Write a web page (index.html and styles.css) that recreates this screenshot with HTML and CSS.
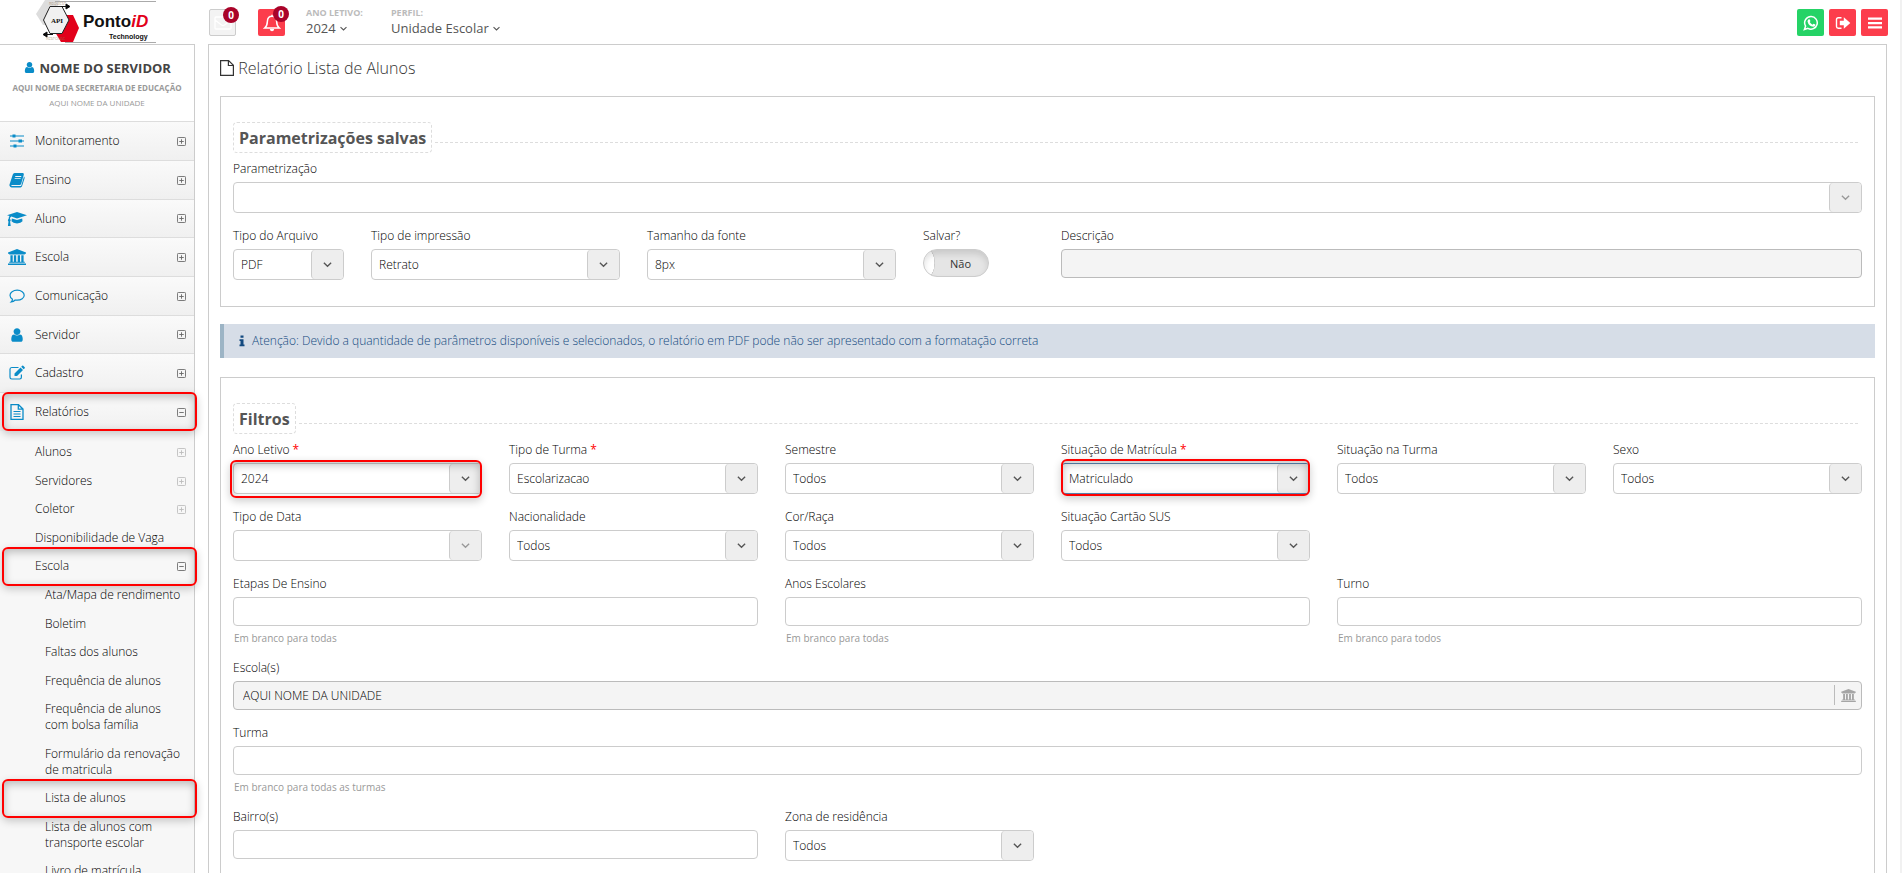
FILE: index.html
```html
<!DOCTYPE html>
<html lang="pt-BR">
<head>
    <meta charset="UTF-8">
    <meta name="viewport" content="width=device-width, initial-scale=1.0">
    <title>Relatório Lista de Alunos</title>
    <link rel="stylesheet" href="styles.css">
</head>
<body>

<!-- icons -->
<svg class="sprite" xmlns="http://www.w3.org/2000/svg">
    <symbol id="i-user" viewBox="0 0 1792 1792"><path d="M1536 1399q0 109-62.5 187t-150.5 78h-854q-88 0-150.5-78t-62.5-187q0-85 8.5-160.5t31.5-152 58.5-131 94-89 134.5-34.5q131 128 313 128t313-128q76 0 134.5 34.5t94 89 58.5 131 31.5 152 8.5 160.5zm-256-887q0 159-112.5 271.5t-271.5 112.5-271.5-112.5-112.5-271.5 112.5-271.5 271.5-112.5 271.5 112.5 112.5 271.5z"/></symbol>
    <symbol id="i-down" viewBox="0 0 10 10"><path d="M1.700 3.400L5 6.600l3.300-3.200" fill="none" stroke="currentColor" stroke-width="1.200"/></symbol>
    <symbol id="i-plus" viewBox="0 0 10 10"><path d="M1.500.5h7q1 0 1 1v7q0 1-1 1h-7q-1 0-1-1v-7q0-1 1-1zM5 2.500v5M2.500 5h5" fill="none" stroke="currentColor"/></symbol>
    <symbol id="i-minus" viewBox="0 0 10 10"><path d="M1.500.5h7q1 0 1 1v7q0 1-1 1h-7q-1 0-1-1v-7q0-1 1-1zM2.500 5h5" fill="none" stroke="currentColor"/></symbol>
    <symbol id="i-sliders" viewBox="0 0 16 16"><path d="M1 2.500h14v1.100H1zM1 7.500h14v1.100H1zM1 12.500h14v1.100H1z"/><path d="M3.500 1.500h3v3.100h-3zM9.500 6.500h3.500v3.100H9.500zM4.500 11.500h3v3.100h-3z"/></symbol>
    <symbol id="i-book" viewBox="0 0 16 16"><path fill-rule="evenodd" d="M5.600 1h8.200q1.400.2 1 1.700l-2.600 9q-.4 1.300-1.700 1.300H3.200q-.9 0-1 .6.100.5 1 .5h8.200q.7 0 .9-.7l2.700-8.900q.9.600.6 1.700l-2.500 7.900q-.4 1.300-1.700 1.300H2.700q-1.700-.1-2.200-1.700-.2-.9.200-1.700L3.800 2.600Q4.300 1.100 5.600 1zM6.400 4l-.3.900h6l.3-.9zM5.800 6.200l-.3.900h6l.3-.9z"/></symbol>
    <symbol id="i-cap" viewBox="0 0 20 16"><path d="M10 1l10 3.200-10 3.300-5.700-1.900q-1.300.8-1.400 2.400.8.500.8 1.300 0 .8-.6 1.200L3.700 15H.900l.6-4.500q-.6-.5-.6-1.200 0-.8.700-1.300.1-1.700.9-2.900L0 4.200zM4.800 7.400L10 9.100l5.200-1.700.3 2.900Q14 12.300 10 12.400q-4-.1-5.500-2.100z"/></symbol>
    <symbol id="i-bank" viewBox="0 0 18 16"><path d="M9 0l9 3.500v1.200h-1.200v.8H1.200v-.8H0V3.500zM2.400 6.200h2.300v6.600h1.200V6.200h2.300v6.600h1.500V6.200H12v6.600h1.300V6.200h2.300v6.600h1.200v1H1.200v-1h1.200zM0 16v-1.500h18V16z"/></symbol>
    <symbol id="i-comment" viewBox="0 0 16 16"><path d="M8.200 2.200c4 0 7 2.200 7 5s-3 5-7 5q-1 0-2-.2-1.700 1.700-4 2 1.200-1.200 1.300-2.800C2 10.200 1 8.800 1 7.200c0-2.800 3.200-5 7.200-5z" fill="none" stroke="currentColor" stroke-width="1.200"/></symbol>
    <symbol id="i-edit" viewBox="0 0 16 16"><path d="M9.500 2.500H2.700Q1 2.600 1 4.300v8q0 1.700 1.700 1.700h8q1.700 0 1.700-1.700V9.500" fill="none" stroke="currentColor" stroke-width="1.200"/><path d="M5.500 8.500l6-6 2.500 2.500-6 6H5.500zM12.200 1.800l1-1q.5-.4 1 0l1.500 1.500q.4.500 0 1l-1 1z"/></symbol>
    <symbol id="i-report" viewBox="0 0 16 16"><path d="M2 .7h7.500L14 5v10.300H2zM9.300.7v4.500H14" fill="none" stroke="currentColor" stroke-width="1.300"/><path d="M4.500 7h7v1.100h-7zM4.500 9.500h7v1.100h-7zM4.500 12h7v1.100h-7z"/></symbol>
    <symbol id="i-file" viewBox="0 0 14 16"><path d="M.6.6h8l4.800 4.600v10.200H.6zM8.400.8v4.700h4.800" fill="none" stroke="currentColor" stroke-width="1.200"/></symbol>
    <symbol id="i-mail" viewBox="0 0 18 14"><path d="M2 1h14q1 0 1 1v10q0 1-1 1H2q-1 0-1-1V2q0-1 1-1zM1 4l6.500 5q1.500 1 3 0L17 4" fill="none" stroke="currentColor" stroke-width="1.300"/></symbol>
    <symbol id="i-bell" viewBox="0 0 18 18"><path d="M9 2.200c3 0 4.500 2.200 4.600 5 .1 3.400.9 5.300 2.700 6.900H1.700c1.800-1.600 2.600-3.500 2.700-6.900.1-2.800 1.600-5 4.600-5zM9 2.200V.8" fill="none" stroke="currentColor" stroke-width="1.500"/><path d="M6.800 15h4.400q-.3 2.200-2.200 2.200T6.800 15z"/></symbol>
    <symbol id="i-whats" viewBox="0 0 16 16"><path d="M8.200 1.500a6.300 6.300 0 1 1-3.300 11.800l-3.500 1.200 1.200-3.400A6.300 6.300 0 0 1 8.200 1.500z" fill="none" stroke="currentColor" stroke-width="1.500"/><path d="M5.700 4.300q.7-.4 1.100.3l.6 1.400q0 .4-.7 1.100 1 1.900 2.800 2.600l.9-1q.2-.2 2 .9.100 1.900-2 2.200-4.700-.6-5.900-5.400 0-1.400 1.200-2.100z"/></symbol>
    <symbol id="i-exit" viewBox="0 0 16 14"><path d="M6.500 1.800H3.300Q1.500 1.800 1.500 3.500v7q0 1.700 1.800 1.700h3.200" fill="none" stroke="currentColor" stroke-width="1.400"/><path d="M4.800 4.700h4V1.200L15.300 7l-6.500 5.800V9.300h-4z"/></symbol>
    <symbol id="i-bars" viewBox="0 0 14 12"><path d="M0 .5h14v2.300H0zM0 5h14v2.200H0zM0 9.200h14v2.300H0z"/></symbol>
    <symbol id="i-info" viewBox="0 0 6 12"><path d="M1.500.5h3v2.300h-3zM.5 4.200h4v5.300h1v1.800h-5V9.500h1V6h-1z"/></symbol>
</svg>

<header class="topbar">
    <a class="logo" href="#">
        <svg width="122" height="44" viewBox="0 0 122 44">
            <path d="M1 14L10 0h15l-10 25H8z" fill="#ddd"/>
            <path d="M27 15h11l6 13-6 14H26l-6-10z" fill="#e2001a"/>
            <path d="M15 6.500h12L34 20l-7 13.500H15L8.500 20z" fill="#f1f1f1" stroke="#222"/>
            <path d="M20 1.500h101M30 42.500h91" stroke="#aaa"/>
            <path d="M26 6.500h6M31 4l4 2.500-4 2.500zM10 34.500h8M12 32l-4 2.500 4 2.500z" stroke="#111"/>
            <text class="logo-tiny" x="14" y="5">REQUEST</text>
            <text class="logo-tiny" x="11" y="40">RESPONSE</text>
            <text class="logo-api" x="16" y="23">API</text>
            <text class="logo-name" x="48" y="27">Ponto<tspan class="logo-id">iD</tspan></text>
            <text class="logo-sub" x="74" y="39">Technology</text>
        </svg>
    </a>
    <div class="alerts">
        <button class="btn-icon btn-mail" aria-label="Mensagens"><svg width="18" height="14"><use href="#i-mail"/></svg><span class="badge">0</span></button>
        <button class="btn-icon btn-red" aria-label="Notificações"><svg width="18" height="18"><use href="#i-bell"/></svg><span class="badge">0</span></button>
    </div>
    <div class="context">
        <span class="context-label">ANO LETIVO:</span>
        <a href="#">2024 <svg width="9" height="9"><use href="#i-down"/></svg></a>
    </div>
    <div class="context">
        <span class="context-label">PERFIL:</span>
        <a href="#">Unidade Escolar <svg width="9" height="9"><use href="#i-down"/></svg></a>
    </div>
    <div class="actions">
        <button class="btn-icon btn-green" aria-label="WhatsApp"><svg width="16" height="16"><use href="#i-whats"/></svg></button>
        <button class="btn-icon btn-red" aria-label="Sair"><svg width="16" height="14"><use href="#i-exit"/></svg></button>
        <button class="btn-icon btn-red" aria-label="Menu"><svg width="14" height="12"><use href="#i-bars"/></svg></button>
    </div>
</header>

<div class="layout">
    <aside class="sidebar">
        <div class="login-info">
            <strong class="login-name"><svg width="13" height="13"><use href="#i-user"/></svg> NOME DO SERVIDOR</strong>
            <b class="login-org">AQUI NOME DA SECRETARIA DE EDUCAÇÃO</b>
            <span class="login-unit">AQUI NOME DA UNIDADE</span>
        </div>
        <nav>
            <ul class="menu">
                <li><a href="#"><svg class="icon"><use href="#i-sliders"/></svg>Monitoramento<svg class="toggle"><use href="#i-plus"/></svg></a></li>
                <li><a href="#"><svg class="icon"><use href="#i-book"/></svg>Ensino<svg class="toggle"><use href="#i-plus"/></svg></a></li>
                <li><a href="#"><svg class="icon icon-wide"><use href="#i-cap"/></svg>Aluno<svg class="toggle"><use href="#i-plus"/></svg></a></li>
                <li><a href="#"><svg class="icon icon-wide"><use href="#i-bank"/></svg>Escola<svg class="toggle"><use href="#i-plus"/></svg></a></li>
                <li><a href="#"><svg class="icon"><use href="#i-comment"/></svg>Comunicação<svg class="toggle"><use href="#i-plus"/></svg></a></li>
                <li><a href="#"><svg class="icon"><use href="#i-user"/></svg>Servidor<svg class="toggle"><use href="#i-plus"/></svg></a></li>
                <li><a href="#"><svg class="icon"><use href="#i-edit"/></svg>Cadastro<svg class="toggle"><use href="#i-plus"/></svg></a></li>
                <li>
                    <a class="marked" href="#"><svg class="icon"><use href="#i-report"/></svg>Relatórios<svg class="toggle"><use href="#i-minus"/></svg></a>
                    <ul class="submenu">
                        <li><a href="#">Alunos<svg class="toggle dim"><use href="#i-plus"/></svg></a></li>
                        <li><a href="#">Servidores<svg class="toggle dim"><use href="#i-plus"/></svg></a></li>
                        <li><a href="#">Coletor<svg class="toggle dim"><use href="#i-plus"/></svg></a></li>
                        <li><a href="#">Disponibilidade de Vaga</a></li>
                        <li>
                            <a class="marked" href="#">Escola<svg class="toggle"><use href="#i-minus"/></svg></a>
                            <ul>
                                <li><a href="#">Ata/Mapa de rendimento</a></li>
                                <li><a href="#">Boletim</a></li>
                                <li><a href="#">Faltas dos alunos</a></li>
                                <li><a href="#">Frequência de alunos</a></li>
                                <li><a href="#">Frequência de alunos<br>com bolsa família</a></li>
                                <li><a href="#">Formulário da renovação<br>de matricula</a></li>
                                <li><a class="marked" href="#">Lista de alunos</a></li>
                                <li><a href="#">Lista de alunos com<br>transporte escolar</a></li>
                                <li><a href="#">Livro de matrícula</a></li>
                            </ul>
                        </li>
                    </ul>
                </li>
            </ul>
        </nav>
    </aside>

    <main class="content">
        <h1><svg width="14" height="16"><use href="#i-file"/></svg> Relatório Lista de Alunos</h1>

        <section class="panel">
            <h2><span>Parametrizações salvas</span></h2>
            <div class="row">
                <div class="col-12">
                    <label for="parametrizacao">Parametrização</label>
                    <div class="select off"><select id="parametrizacao" disabled><option></option></select><svg><use href="#i-down"/></svg></div>
                </div>
            </div>
            <div class="row">
                <div class="col-1">
                    <label for="arquivo">Tipo do Arquivo</label>
                    <div class="select"><select id="arquivo"><option>PDF</option></select><svg><use href="#i-down"/></svg></div>
                </div>
                <div class="col-2">
                    <label for="impressao">Tipo de impressão</label>
                    <div class="select"><select id="impressao"><option>Retrato</option></select><svg><use href="#i-down"/></svg></div>
                </div>
                <div class="col-2">
                    <label for="fonte">Tamanho da fonte</label>
                    <div class="select"><select id="fonte"><option>8px</option></select><svg><use href="#i-down"/></svg></div>
                </div>
                <div class="col-1">
                    <label for="salvar">Salvar?</label>
                    <div class="switch"><input type="checkbox" id="salvar"><span>Não</span></div>
                </div>
                <div class="col-6">
                    <label for="descricao">Descrição</label>
                    <input type="text" id="descricao" disabled>
                </div>
            </div>
        </section>

        <div class="notice"><svg width="6" height="12"><use href="#i-info"/></svg>Atenção: Devido a quantidade de parâmetros disponíveis e selecionados, o relatório em PDF pode não ser apresentado com a formatação correta</div>

        <section class="panel">
            <h2><span>Filtros</span></h2>
            <div class="row">
                <div class="col-2">
                    <label for="ano">Ano Letivo <em>*</em></label>
                    <div class="select marked"><select id="ano"><option>2024</option></select><svg><use href="#i-down"/></svg></div>
                </div>
                <div class="col-2">
                    <label for="tipoTurma">Tipo de Turma <em>*</em></label>
                    <div class="select"><select id="tipoTurma"><option>Escolarizacao</option></select><svg><use href="#i-down"/></svg></div>
                </div>
                <div class="col-2">
                    <label for="semestre">Semestre</label>
                    <div class="select"><select id="semestre"><option>Todos</option></select><svg><use href="#i-down"/></svg></div>
                </div>
                <div class="col-2">
                    <label for="matricula">Situação de Matrícula <em>*</em></label>
                    <div class="select marked active"><select id="matricula"><option>Matriculado</option></select><svg><use href="#i-down"/></svg></div>
                </div>
                <div class="col-2">
                    <label for="situacaoTurma">Situação na Turma</label>
                    <div class="select"><select id="situacaoTurma"><option>Todos</option></select><svg><use href="#i-down"/></svg></div>
                </div>
                <div class="col-2">
                    <label for="sexo">Sexo</label>
                    <div class="select"><select id="sexo"><option>Todos</option></select><svg><use href="#i-down"/></svg></div>
                </div>
            </div>
            <div class="row">
                <div class="col-2">
                    <label for="tipoData">Tipo de Data</label>
                    <div class="select off"><select id="tipoData" disabled><option></option></select><svg><use href="#i-down"/></svg></div>
                </div>
                <div class="col-2">
                    <label for="nacionalidade">Nacionalidade</label>
                    <div class="select"><select id="nacionalidade"><option>Todos</option></select><svg><use href="#i-down"/></svg></div>
                </div>
                <div class="col-2">
                    <label for="cor">Cor/Raça</label>
                    <div class="select"><select id="cor"><option>Todos</option></select><svg><use href="#i-down"/></svg></div>
                </div>
                <div class="col-2">
                    <label for="sus">Situação Cartão SUS</label>
                    <div class="select"><select id="sus"><option>Todos</option></select><svg><use href="#i-down"/></svg></div>
                </div>
            </div>
            <div class="row">
                <div class="col-4">
                    <label for="etapas">Etapas De Ensino</label>
                    <input type="text" id="etapas">
                    <p class="help">Em branco para todas</p>
                </div>
                <div class="col-4">
                    <label for="anos">Anos Escolares</label>
                    <input type="text" id="anos">
                    <p class="help">Em branco para todas</p>
                </div>
                <div class="col-4">
                    <label for="turno">Turno</label>
                    <input type="text" id="turno">
                    <p class="help">Em branco para todos</p>
                </div>
            </div>
            <div class="row">
                <div class="col-12">
                    <label for="escola">Escola(s)</label>
                    <div class="addon"><input type="text" id="escola" value="AQUI NOME DA UNIDADE" disabled><span><svg width="15" height="13"><use href="#i-bank"/></svg></span></div>
                </div>
            </div>
            <div class="row">
                <div class="col-12">
                    <label for="turma">Turma</label>
                    <input type="text" id="turma">
                    <p class="help">Em branco para todas as turmas</p>
                </div>
            </div>
            <div class="row">
                <div class="col-4">
                    <label for="bairro">Bairro(s)</label>
                    <input type="text" id="bairro">
                </div>
                <div class="col-2">
                    <label for="zona">Zona de residência</label>
                    <div class="select"><select id="zona"><option>Todos</option></select><svg><use href="#i-down"/></svg></div>
                </div>
            </div>
        </section>
    </main>
</div>

</body>
</html>
```

FILE: styles.css
```css
*,
*::after {
    box-sizing: border-box;
}
body {
    display: flex;
    flex-direction: column;
    height: 100vh;
    margin: 0;
    overflow: hidden;
    border-right: 2px solid #f1f1f1;
    background-color: #fff;
    font-family: "Open Sans", Arial, sans-serif;
    font-size: 12px;
    font-weight: 300;
    line-height: 18px;
    color: #000;
}
a {
    color: inherit;
    text-decoration: none;
}
ul {
    margin: 0;
    padding: 0;
    list-style: none;
}
svg {
    fill: currentColor;
}
.sprite {
    display: none;
}

/* top bar */
.topbar {
    display: flex;
    flex: none;
    height: 44px;
    padding-right: 12px;
}
.logo {
    width: 209px;
    padding-left: 35px;
}
.logo svg {
    display: block;
}
.logo-tiny {
    font-size: 4px;
    fill: #97704a;
}
.logo-api {
    font: bold 7px "Liberation Serif", serif;
    fill: #111;
}
.logo-name {
    font: bold 17px "Liberation Sans", Arial, sans-serif;
    fill: #111;
}
.logo-id {
    font-style: italic;
    fill: #e2001a;
}
.logo-sub {
    font: bold 7px "Liberation Sans", Arial, sans-serif;
    fill: #111;
}
.alerts {
    display: flex;
    gap: 22px;
    margin: 9px 21px 0 0;
}
.actions {
    display: flex;
    gap: 5px;
    margin: 9px 0 0 auto;
}
.btn-icon {
    display: flex;
    align-items: center;
    justify-content: center;
    position: relative;
    width: 27px;
    height: 27px;
    padding: 0;
    border: 0;
    border-radius: 2px;
    color: #fff;
    font-family: inherit;
}
.btn-mail {
    border: 1px solid #ccc;
    background-color: #f3f3f3;
}
.btn-red {
    background-color: #fc3d4c;
}
.btn-green {
    background-color: #25d366;
}
.badge {
    position: absolute;
    top: -3px;
    right: -4px;
    width: 16px;
    height: 16px;
    border-radius: 8px;
    background-color: #a90329;
    font-size: 10px;
    font-weight: bold;
    line-height: 16px;
}
.context {
    margin: 6px 28px 0 0;
    font-size: 13px;
    font-weight: 400;
    color: #555;
}
.context-label {
    display: block;
    font-size: 9px;
    font-weight: bold;
    line-height: 13px;
    color: #bbb;
}

/* sidebar */
.layout {
    display: flex;
    flex: 1;
    min-height: 0;
}
.sidebar {
    flex: none;
    width: 195px;
    margin-right: 13px;
    border: 1px solid #ccc;
    border-width: 1px 1px 0 0;
    background-color: #f7f7f7;
    white-space: nowrap;
}
.login-info {
    height: 76px;
    padding-top: 13px;
    background-color: #fff;
    text-align: center;
}
.login-info > * {
    display: block;
}
.login-name {
    font-size: 13px;
    font-weight: 700;
    line-height: 20px;
    color: #444;
}
.login-name svg {
    color: #0a8cc8;
    vertical-align: -1px;
}
.login-org {
    font-size: 8px;
    font-weight: 700;
    line-height: 20px;
    color: #999;
}
.login-unit {
    font-size: 8px;
    font-weight: 400;
    line-height: 10px;
    color: #999;
}
.menu a {
    display: flex;
    align-items: center;
    position: relative;
}
.menu > li > a {
    height: 39px;
    padding-right: 8px;
    border-top: 1px solid #ddd;
    background: linear-gradient(#fafafa, #f0f0f0);
}
.menu > li:nth-child(3n) > a {
    height: 38px;
}
.icon {
    width: 16px;
    height: 16px;
    margin: 0 10px 0 9px;
    color: #0a8cc8;
}
.icon-wide {
    width: 20px;
    margin: 0 8px 0 7px;
}
.toggle {
    width: 9px;
    height: 9px;
    margin-left: auto;
    color: #666;
}
.toggle.dim {
    color: #bbb;
}
.submenu {
    padding-top: 7px;
    line-height: 16px;
}
.submenu a {
    padding: 6px 8px 7px 35px;
}
.submenu li:nth-child(even) > a {
    padding-bottom: 6px;
}
.submenu ul a {
    padding-left: 45px;
}

/* red frame over the highlighted items */
.marked {
    position: relative;
}
.marked::after {
    content: "";
    position: absolute;
    inset: -3px 0 -4px -3px;
    z-index: 1;
    border: 2px solid #f00;
    border-radius: 6px;
    box-shadow: 0 3px 8px rgba(0, 0, 0, 0.2), inset 0 3px 8px rgba(0, 0, 0, 0.25);
    pointer-events: none;
}
.menu .marked::after {
    top: 50%;
    bottom: auto;
    left: 2px;
    right: -3px;
    height: 39px;
    margin-top: -20px;
}

/* content */
.content {
    flex: 1;
    height: max-content;
    min-height: 100%;
    margin-right: 13px;
    padding: 0 11px 12px;
    border: 1px solid #ccc;
}
h1 {
    margin: 12px 0 17px;
    font-size: 16px;
    font-weight: 300;
    line-height: 22px;
    color: #333;
}
h1 svg {
    vertical-align: -2px;
}
.panel {
    padding: 25px 12px 13px;
    border: 1px solid #ccc;
}
h2 {
    display: flex;
    align-items: center;
    margin: 0 0 6px;
    padding-right: 4px;
    font-size: 16px;
    line-height: 28px;
    color: #555;
}
h2 span {
    padding: 1px 5px 0;
    border: 1px dashed #ddd;
    border-radius: 4px;
}
h2::after {
    content: "";
    flex: 1;
    margin: 9px 0 0 3px;
    border-top: 1px dashed #ddd;
}
.row {
    display: grid;
    grid-template-columns: repeat(12, 1fr);
    column-gap: 27px;
    margin-bottom: 13px;
}
.row > div {
    min-width: 0;
}
.col-1 {
    grid-column: span 1;
}
.col-2 {
    grid-column: span 2;
}
.col-4 {
    grid-column: span 4;
}
.col-6 {
    grid-column: span 6;
}
.col-12 {
    grid-column: span 12;
}
label {
    display: block;
    margin-bottom: 3px;
    line-height: 20px;
    white-space: nowrap;
}
label em {
    font-style: normal;
    font-weight: 400;
    color: #f00;
}
input[type="text"],
select {
    display: block;
    width: 100%;
    height: 29px;
    margin: 0;
    padding: 0 9px;
    border: 1px solid #ccc;
    border-radius: 4px;
    background-color: #fff;
    font-family: inherit;
    font-size: 12px;
    font-weight: inherit;
    color: #000;
}
input[type="text"]:disabled {
    border-color: #bbb;
    background-color: #f4f4f4;
}
.select {
    position: relative;
}
select {
    appearance: none;
    height: 31px;
    padding: 0 40px 0 7px;
    opacity: 1;
}
.select svg {
    position: absolute;
    top: 1px;
    right: 1px;
    width: 32px;
    height: 29px;
    padding: 9px 10px;
    border-left: 1px solid #ccc;
    border-radius: 4px;
    background-color: #eee;
    color: #555;
    pointer-events: none;
}
.select.off svg {
    color: #999;
}
.active select {
    border-color: #5b88b5;
}
.active.marked::after {
    inset: -4px 0 -2px;
}
.switch {
    position: relative;
    width: 66px;
    height: 28px;
}
.switch input {
    appearance: none;
    width: 100%;
    height: 100%;
    margin: 0;
    border: 1px solid #ccc;
    border-radius: 14px;
    background: radial-gradient(ellipse 12px 18px at 0 50%, #fff 85%, #ccc 88%, transparent 95%) #e5e5e5;
    box-shadow: inset 0 4px 6px rgba(0, 0, 0, 0.12);
}
.switch span {
    position: absolute;
    top: 6px;
    right: 18px;
    font-size: 11px;
    font-weight: 400;
    color: #333;
    pointer-events: none;
}
.help {
    margin: 5px 0 0;
    padding-left: 1px;
    font-size: 10px;
    font-weight: 400;
    line-height: 14px;
    color: #999;
}
.addon {
    position: relative;
}
.addon span {
    display: flex;
    align-items: center;
    justify-content: center;
    position: absolute;
    top: 4px;
    right: 1px;
    width: 27px;
    height: 20px;
    border-left: 1px solid #bbb;
    color: #a5a5a5;
}
.notice {
    margin: 17px 0 19px;
    padding: 8px 15px;
    border-left: 4px solid #9cb4c5;
    background-color: #d6dde7;
    color: #134a80;
}
.notice svg {
    margin-right: 7px;
    vertical-align: -2px;
}
```
